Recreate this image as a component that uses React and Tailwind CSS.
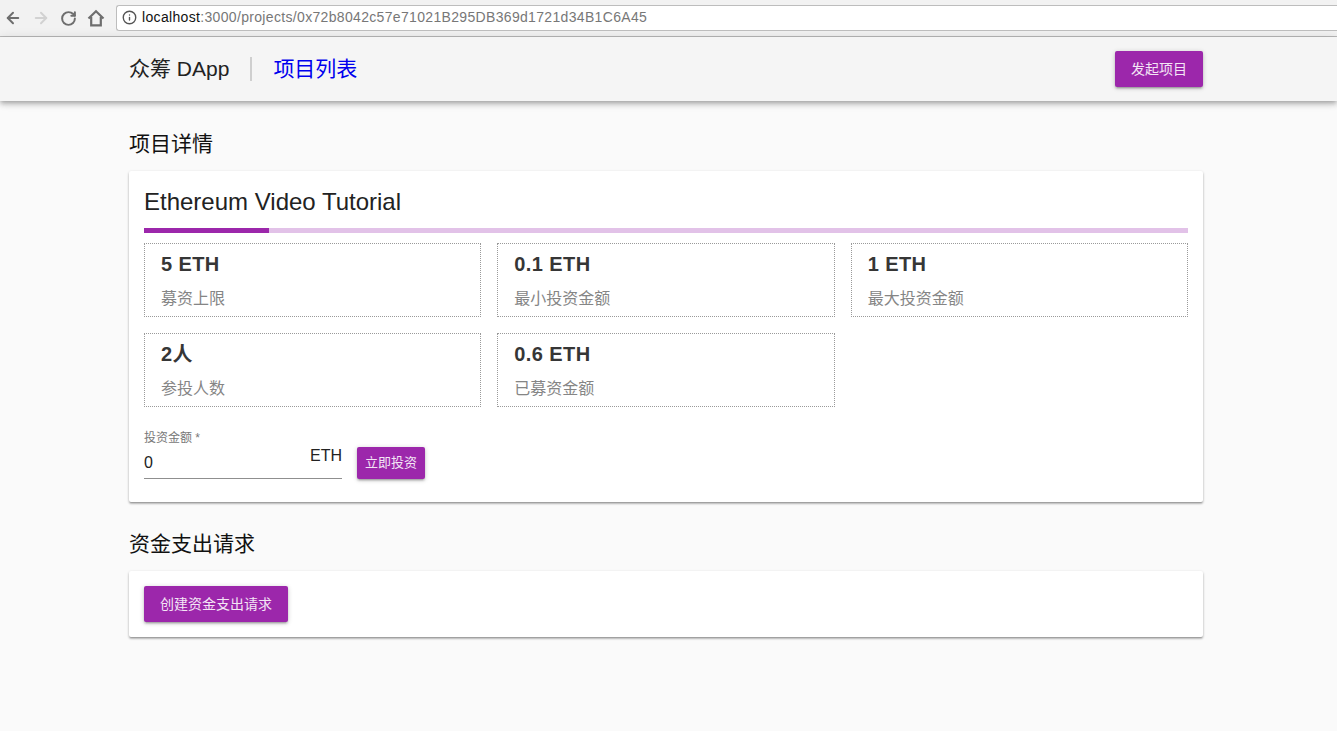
import { ArrowLeft, ArrowRight, Info, RotateCw } from "lucide-react";

const CJK = "font-['Liberation_Sans','Noto_Sans_CJK_SC',sans-serif]";
const CARD = "bg-white rounded-[2px] shadow-[0_1px_3px_rgba(0,0,0,0.2),0_2px_2px_rgba(0,0,0,0.18),0_2px_1px_-1px_rgba(0,0,0,0.12)] px-[15px] pt-[15px]";

const StatBox = ({ value, label }) => (
  <div className="h-[74px] border border-dotted border-[#9a9a9a] pl-4 pt-[6px]">
    <div className="text-[20px] leading-[28px] font-bold text-[#363636] tracking-[0.4px]">{value}</div>
    <div className="mt-[9px] text-[16px] leading-[24px] text-[#858585]">{label}</div>
  </div>
);

const PurpleButton = ({ className, children }) => (
  <button className={`bg-[#9c27ab] text-[#f3e5f5] rounded-[2px] shadow-[0_1px_5px_rgba(0,0,0,0.2),0_2px_2px_rgba(0,0,0,0.14),0_3px_1px_-2px_rgba(0,0,0,0.12)] ${className}`}>
    {children}
  </button>
);

const HomeIcon = () => (
  <svg width="18" height="18" viewBox="0 0 18 18" fill="none" stroke="currentColor" strokeWidth="2.2">
    <path d="M1.5 9.5 9 2.2l7.5 7.3" />
    <path d="M4.2 8v8.4h9.6V8" />
  </svg>
);

const BrowserBar = () => (
  <div className="h-[37px] bg-[#f2f2f2] border-b border-[#b9b9b9] flex items-center pl-[4px]">
    <div className="flex items-center gap-[10px] text-[#6e6e6e]">
      <ArrowLeft size={18} strokeWidth={2.6} />
      <ArrowRight size={18} strokeWidth={2.6} className="text-[#d2d2d2]" />
      <RotateCw size={17} strokeWidth={2.8} />
      <HomeIcon />
    </div>
    <div className="ml-[11px] flex-1 h-[26px] -mt-[1px] bg-white border border-r-0 border-[#bdbdbd] rounded-l-[3px] flex items-center pl-[5px] text-[14px] tracking-[0.33px]">
      <Info size={15} strokeWidth={2.2} className="text-[#555] mr-[5px]" />
      <span className="text-[#111]">localhost</span>
      <span className="text-[#777]">:3000/projects/0x72b8042c57e71021B295DB369d1721d34B1C6A45</span>
    </div>
  </div>
);

const App = () => {
  return (
    <div className={`min-h-[731px] bg-[#fafafa] ${CJK}`}>
      <BrowserBar />
      <header className="h-[64px] bg-[#f5f5f5] shadow-[0_2px_4px_-1px_rgba(0,0,0,0.2),0_4px_5px_rgba(0,0,0,0.14),0_1px_10px_rgba(0,0,0,0.12)]">
        <div className="w-[1074px] ml-[129px] h-full flex items-center">
          <span className="text-[21px] text-[#222]">众筹 DApp</span>
          <span className="ml-[21px] h-[24px] w-[2px] bg-[#cfcfcf]" />
          <span className="ml-[21px] text-[21px] text-[#0000ee]">项目列表</span>
          <PurpleButton className="ml-auto w-[88px] h-[36px] text-[14px]">发起项目</PurpleButton>
        </div>
      </header>

      <main className="w-[1074px] ml-[129px]">
        <h2 className="mt-[29px] h-[28px] text-[21px] leading-[28px] text-[#111]">项目详情</h2>
        <section className={`mt-[13px] h-[331px] ${CARD}`}>
          <div className="text-[24px] leading-[32px] text-[#222]">Ethereum Video Tutorial</div>
          <div className="mt-[10px] h-[5px] bg-[#e2c2e8]">
            <div className="h-full w-[12%] bg-[#9c27ab]" />
          </div>
          <div className="mt-[10px] grid grid-cols-3 gap-x-4 gap-y-4">
            <StatBox value="5 ETH" label="募资上限" />
            <StatBox value="0.1 ETH" label="最小投资金额" />
            <StatBox value="1 ETH" label="最大投资金额" />
            <StatBox value="2人" label="参投人数" />
            <StatBox value="0.6 ETH" label="已募资金额" />
          </div>
          <div className="mt-[23px] flex items-start">
            <div className="w-[198px] h-[49px] border-b border-[#8f8f8f]">
              <div className="text-[12px] leading-[16px] text-[#777]">投资金额 *</div>
              <div className="mt-[2px] flex justify-between text-[16px] text-[#222]">
                <span className="mt-[3px]">0</span>
                <span className="-mt-[4px]">ETH</span>
              </div>
            </div>
            <PurpleButton className="ml-[15px] mt-[17px] w-[68px] h-[32px] text-[13px]">立即投资</PurpleButton>
          </div>
        </section>

        <h2 className="mt-[28px] h-[28px] text-[21px] leading-[28px] text-[#111]">资金支出请求</h2>
        <section className={`mt-[13px] h-[66px] ${CARD}`}>
          <PurpleButton className="w-[144px] h-[36px] text-[14px]">创建资金支出请求</PurpleButton>
        </section>
      </main>
    </div>
  );
};

export default App;
